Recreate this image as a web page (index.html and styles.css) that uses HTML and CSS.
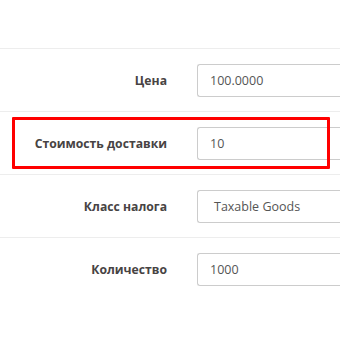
FILE: index.html
```html
<!DOCTYPE html>
<html>
<head>
<meta charset="utf-8">
<link rel="stylesheet" href="styles.css">
</head>
<body>
<div class="form">
  <div class="row">
    <label class="label">Цена</label>
    <div class="field"><input class="input" type="text" value="100.0000"></div>
  </div>
  <div class="row">
    <label class="label">Стоимость доставки</label>
    <div class="field"><input class="input" type="text" value="10"></div>
  </div>
  <div class="row">
    <label class="label">Класс налога</label>
    <div class="field"><div class="input select">Taxable Goods</div></div>
  </div>
  <div class="row">
    <label class="label">Количество</label>
    <div class="field"><input class="input" type="text" value="1000"></div>
  </div>
  <div class="highlight"></div>
</div>
</body>
</html>
```
FILE: styles.css
```css
html, body {
  margin: 0;
  padding: 0;
  background: #fff;
  width: 340px;
  height: 340px;
  overflow: hidden;
}
body {
  font-family: "Open Sans", "Liberation Sans", sans-serif;
}
.form {
  position: relative;
  padding-top: 48px;
}
.row {
  display: flex;
  align-items: center;
  border-top: 1px solid #ededed;
  padding: 15px 0 14px;
}
.label {
  width: 167px;
  flex: none;
  text-align: right;
  font-weight: 700;
  font-size: 12.2px;
  color: #474343;
}
.field {
  flex: none;
  margin-left: 30px;
  width: 143px;
}
.input {
  display: block;
  box-sizing: border-box;
  width: 143px;
  height: 33px;
  border: 1px solid #ccc;
  border-right: none;
  border-radius: 3px 0 0 3px;
  padding: 0 12px;
  font-family: "Open Sans", "Liberation Sans", sans-serif;
  font-size: 12.5px;
  color: #555;
  background: #fff;
  outline: none;
}
.select {
  line-height: 31px;
  padding-left: 16px;
  color: #555;
}
.highlight {
  position: absolute;
  left: 12px;
  top: 117px;
  width: 318px;
  height: 52px;
  box-sizing: border-box;
  border: 3px solid #f00;
  border-radius: 1px;
}
```
